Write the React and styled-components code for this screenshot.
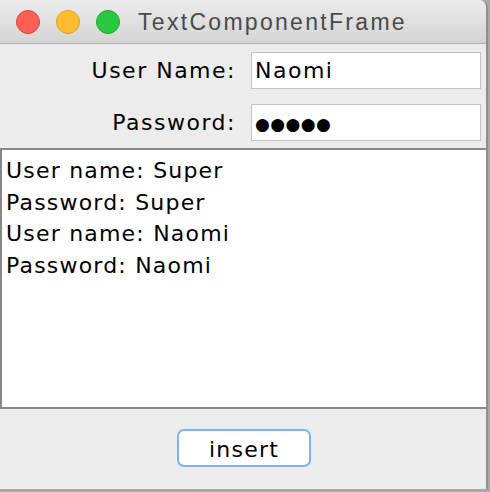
import React from "react";
import styled, { createGlobalStyle } from "styled-components";

const Global = createGlobalStyle`
  html, body { margin: 0; padding: 0; background: #ffffff; }
  #root { width: 490px; height: 492px; }
`;

const Screen = styled.div`
  width: 490px;
  height: 492px;
  background: #a9a9a9;
  overflow: hidden;
`;

const Window = styled.div`
  width: 486px;
  height: 489px;
  display: flex;
  flex-direction: column;
  background: #ececec;
  border-right: 2px solid #8f8f8f;
  border-top-right-radius: 8px;
  overflow: hidden;
  font-family: "DejaVu Sans", sans-serif;
  color: #000;
`;

const TitleBar = styled.div`
  height: 43px;
  flex: none;
  display: flex;
  align-items: center;
  background: linear-gradient(#ebebeb, #d4d4d4);
  border-bottom: 1px solid #b3b3b3;
  border-top-right-radius: 8px;
  padding-left: 16px;
`;

const Light = styled.span`
  width: 24px;
  height: 24px;
  border-radius: 50%;
  background: ${(p) => p.$fill};
  border: 1px solid ${(p) => p.$edge};
  box-sizing: border-box;
  margin-right: 16px;
  flex: none;
`;

const Title = styled.div`
  font-family: "Liberation Sans", Arial, sans-serif;
  font-size: 23px;
  letter-spacing: 2.3px;
  color: #4a4a4a;
  margin-left: 2px;
  margin-top: 1px;
`;

const Form = styled.div`
  display: grid;
  grid-template-columns: 1fr 230px;
  column-gap: 15px;
  row-gap: 15px;
  padding: 8px 5px 7px 0;
  align-items: center;
`;

const Label = styled.label`
  text-align: right;
  font-size: 22px;
  letter-spacing: 1.5px;
`;

const Field = styled.div`
  height: 37px;
  box-sizing: border-box;
  background: #fff;
  border: 1px solid #c3c3c3;
  display: flex;
  align-items: center;
  padding-left: 3px;
  font-size: 22px;
  letter-spacing: 1.5px;
`;

const Dots = styled.span`
  font-size: 17px;
  letter-spacing: 0.4px;
  padding-top: 2px;
`;

const TextArea = styled.div`
  flex: none;
  height: 261px;
  background: #fff;
  border: 2px solid #888888;
  border-right: none;
  padding: 5px 4px;
  box-sizing: border-box;
  font-size: 22px;
  letter-spacing: 1.2px;
  line-height: 31.5px;
`;

const Line = styled.div``;

const ButtonBar = styled.div`
  flex: 1;
  display: flex;
  align-items: center;
  justify-content: center;
`;

const Button = styled.button`
  width: 134px;
  height: 38px;
  background: #fff;
  border: 2px solid #7fb2ee;
  border-radius: 7px;
  font-family: "DejaVu Sans", sans-serif;
  font-size: 22px;
  letter-spacing: 1.2px;
  color: #000;
  padding: 2px 0 0;
  margin-left: 2px;
  margin-top: -2px;
`;

export default function App() {
  return (
    <Screen>
      <Global />
      <Window>
        <TitleBar>
          <Light $fill="#fd5f57" $edge="#e0443e" />
          <Light $fill="#febc2e" $edge="#dea123" />
          <Light $fill="#28c840" $edge="#1aab29" />
          <Title>TextComponentFrame</Title>
        </TitleBar>
        <Form>
          <Label>User Name:</Label>
          <Field>Naomi</Field>
          <Label>Password:</Label>
          <Field>
            <Dots>●●●●●</Dots>
          </Field>
        </Form>
        <TextArea>
          <Line>User name: Super</Line>
          <Line>Password: Super</Line>
          <Line>User name: Naomi</Line>
          <Line>Password: Naomi</Line>
        </TextArea>
        <ButtonBar>
          <Button>insert</Button>
        </ButtonBar>
      </Window>
    </Screen>
  );
}
